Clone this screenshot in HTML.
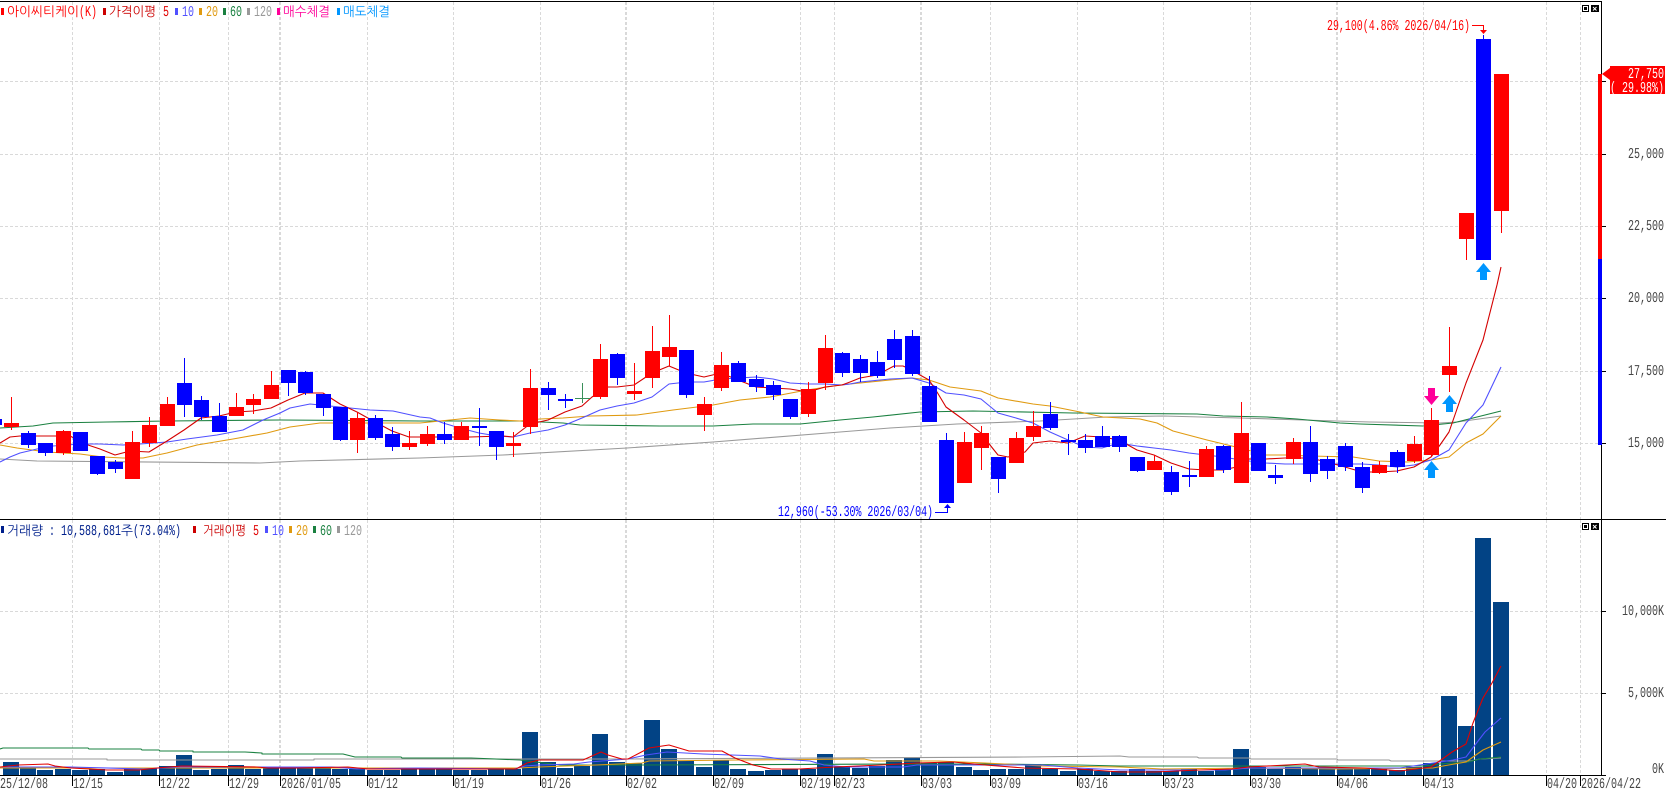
<!DOCTYPE html>
<html lang="ko">
<head>
<meta charset="utf-8">
<title>아이씨티케이(K) 일봉 차트</title>
<style>
html,body{margin:0;padding:0;background:#fff;width:1666px;height:790px;overflow:hidden}
svg{display:block}
text{text-rendering:geometricPrecision}
.m{font-family:"Liberation Mono","DejaVu Sans Mono",monospace;font-size:15px}
.k{font-family:"Liberation Sans","NanumGothic","Noto Sans CJK KR",sans-serif;font-size:13px}
.g{fill:#444}
.l{fill:none;stroke-width:1.1;stroke-linejoin:round}
.c{shape-rendering:crispEdges}
</style>
</head>
<body>
<svg width="1666" height="790" viewBox="0 0 1666 790" xmlns="http://www.w3.org/2000/svg">
<rect width="1666" height="790" fill="#fff"/>

<!-- grid -->
<g class="c" stroke="#d9d9d9" stroke-dasharray="3 2" fill="none">
<path d="M0 81.5H1601M0 154.5H1601M0 226.5H1601M0 298.5H1601M0 371.5H1601M0 443.5H1601M0 611.5H1601M0 693.5H1601"/>
<path d="M72.5 2V519M159.5 2V519M228.5 2V519M367.5 2V519M453.5 2V519M540.5 2V519M713.5 2V519M800.5 2V519M834.5 2V519M990.5 2V519M1077.5 2V519M1163.5 2V519M1250.5 2V519M1423.5 2V519M1546.5 2V519M1580.5 2V519"/>
<path d="M72.5 520V775M159.5 520V775M228.5 520V775M367.5 520V775M453.5 520V775M540.5 520V775M713.5 520V775M800.5 520V775M834.5 520V775M990.5 520V775M1077.5 520V775M1163.5 520V775M1250.5 520V775M1423.5 520V775M1546.5 520V775M1580.5 520V775"/>
<path stroke-width="2" d="M280 2V519M626 2V519M921 2V519M1337 2V519M280 520V775M626 520V775M921 520V775M1337 520V775"/>
</g>

<!-- price moving averages -->
<polyline class="l" stroke="#999" points="0,459 37,461 260,463 300,461 420,458 503,455 627,448 713,442 840,432 890,428 957,424 1040,421 1107,417 1163,416 1240,418 1303,420 1370,422 1440,423 1457,422 1501,416"/>
<polyline class="l" stroke="#1a8040" points="0,428 33,426 53,423 107,422 167,421 280,420 420,421 520,421 563,423 580,425 660,426 713,426 753,424 800,424 840,420 873,417 920,412 973,411 1073,413 1197,414 1223,416 1267,417 1297,419 1340,423 1360,424 1423,426 1453,423 1473,418 1501,411"/>
<polyline class="l" stroke="#e09a10" points="0,445 17,448 47,452 80,454 103,457 123,458 143,458 167,453 197,445 233,439 267,433 290,427 320,423 353,423 420,423 440,421 470,418 500,420 520,421 540,419 563,418 590,416 637,415 673,410 697,407 713,405 740,400 770,397 807,390 840,385 890,380 912,378 929,380 950,387 981,391 998,398 1033,404 1050,406 1080,412 1103,417 1140,419 1157,423 1173,431 1207,440 1240,448 1266,455 1285,455 1310,456 1353,457 1379,461 1407,462 1431,460 1449,457 1466,443 1483,434 1501,416"/>
<polyline class="l" stroke="#5050ff" points="0,462 10,457 20,453 37,449 53,446 80,444 100,444 123,445 140,444 167,442 187,439 217,435 243,430 263,420 280,413 290,408 310,404 330,406 350,408 370,410 393,411 420,417 430,418 443,423 460,428 479,433 497,436 513,437 530,433 548,430 565,425 582,418 600,410 617,406 634,403 652,397 669,384 687,382 704,382 721,379 738,378 756,377 773,379 790,383 808,384 825,384 842,385 850,384 860,382 890,379 912,378 929,383 946,393 964,395 981,399 998,413 1016,418 1033,423 1050,432 1068,440 1085,447 1102,448 1119,443 1137,446 1154,448 1171,450 1189,453 1206,455 1223,457 1241,460 1249,461 1266,463 1285,464 1310,464 1362,464 1379,465 1397,467 1414,465 1431,460 1449,450 1466,423 1483,405 1501,367"/>
<polyline class="l" stroke="#d40000" points="0,443 10,437 20,436 70,436 88,445 100,449 115,455 130,451 149,452 167,441 184,430 201,418 219,416 236,412 253,411 271,408 288,400 305,393 323,393 340,404 357,412 375,422 392,431 409,437 470,437 503,436 513,437 530,424 548,420 565,412 582,406 592,397 608,387 617,387 634,385 652,373 669,366 686,373 704,377 721,373 738,380 756,387 773,388 790,389 808,392 825,387 842,385 850,382 860,378 877,375 894,366 903,366 912,370 920,375 929,380 937,392 946,407 964,420 981,433 990,445 998,455 1008,457 1025,452 1033,443 1050,441 1068,443 1085,436 1102,437 1119,440 1137,450 1154,455 1171,463 1189,469 1206,470 1223,470 1241,466 1249,459 1266,459 1285,458 1310,458 1327,462 1345,467 1362,472 1379,472 1397,471 1414,467 1431,457 1440,445 1449,432 1466,383 1483,340 1497,285 1501,267"/>

<!-- candles -->
<path class="c" fill="#ff0000" d="M4 423h15V427h-15zM11 397h1V430h-1zM56 431h15V453h-15zM63 430h1V455h-1zM125 442h15V479h-15zM132 431h1V442h-1zM142 425h15V443h-15zM149 417h1V447h-1zM160 404h15V426h-15zM167 397h1V404h-1zM229 407h15V416h-15zM236 393h1V407h-1zM246 399h15V405h-15zM253 394h1V414h-1zM264 385h15V399h-15zM271 371h1V385h-1zM350 418h15V440h-15zM357 412h1V453h-1zM402 443h15V447h-15zM409 431h1V450h-1zM420 434h15V444h-15zM427 426h1V446h-1zM454 426h15V440h-15zM461 422h1V426h-1zM506 443h15V446h-15zM513 432h1V457h-1zM523 388h15V427h-15zM530 369h1V434h-1zM593 359h15V397h-15zM600 344h1V399h-1zM627 391h15V394h-15zM634 363h1V400h-1zM645 351h15V378h-15zM652 326h1V388h-1zM662 347h15V357h-15zM669 315h1V366h-1zM697 404h15V415h-15zM704 397h1V431h-1zM714 365h15V388h-15zM721 352h1V391h-1zM801 389h15V414h-15zM808 382h1V417h-1zM818 348h15V383h-15zM825 335h1V390h-1zM957 442h15V483h-15zM964 432h1V442h-1zM974 433h15V448h-15zM981 426h1V470h-1zM1009 438h15V463h-15zM1016 432h1V438h-1zM1026 426h15V437h-15zM1033 411h1V441h-1zM1147 461h15V470h-15zM1154 455h1V461h-1zM1199 449h15V477h-15zM1206 446h1V449h-1zM1234 433h15V483h-15zM1241 402h1V433h-1zM1286 442h15V459h-15zM1293 438h1V464h-1zM1372 465h15V473h-15zM1379 461h1V474h-1zM1407 444h15V461h-15zM1414 436h1V463h-1zM1424 420h15V455h-15zM1431 408h1V457h-1zM1442 366h15V375h-15zM1449 327h1V392h-1zM1459 213h15V239h-15zM1466 239h1V260h-1zM1494 74h15V211h-15zM1501 211h1V233h-1z"/>
<path class="c" fill="#0000ff" d="M-13 419h15V425h-15zM21 433h15V445h-15zM28 431h1V448h-1zM38 443h15V453h-15zM45 453h1V456h-1zM73 432h15V451h-15zM90 456h15V474h-15zM97 474h1V475h-1zM108 462h15V469h-15zM115 460h1V473h-1zM177 383h15V405h-15zM184 358h1V417h-1zM194 400h15V417h-15zM201 396h1V420h-1zM212 416h15V432h-15zM219 403h1V416h-1zM281 370h15V383h-15zM288 383h1V396h-1zM298 372h15V393h-15zM305 371h1V395h-1zM316 394h15V408h-15zM323 408h1V416h-1zM333 407h15V440h-15zM340 440h1V441h-1zM368 418h15V438h-15zM375 415h1V440h-1zM385 434h15V447h-15zM392 427h1V451h-1zM437 434h15V440h-15zM444 422h1V444h-1zM472 426h15V428h-15zM479 408h1V446h-1zM489 431h15V447h-15zM496 447h1V460h-1zM541 388h15V395h-15zM548 382h1V410h-1zM558 399h15V401h-15zM565 394h1V408h-1zM610 354h15V378h-15zM617 353h1V385h-1zM679 350h15V395h-15zM686 395h1V398h-1zM731 363h15V382h-15zM738 361h1V363h-1zM749 379h15V387h-15zM756 375h1V392h-1zM766 385h15V395h-15zM773 381h1V400h-1zM783 399h15V417h-15zM790 417h1V419h-1zM835 353h15V373h-15zM842 352h1V377h-1zM853 359h15V373h-15zM860 355h1V382h-1zM870 362h15V376h-15zM877 351h1V378h-1zM887 339h15V360h-15zM894 330h1V368h-1zM905 336h15V374h-15zM912 330h1V376h-1zM922 386h15V422h-15zM929 376h1V386h-1zM939 440h15V503h-15zM946 433h1V440h-1zM991 457h15V479h-15zM998 479h1V493h-1zM1043 414h15V428h-15zM1050 402h1V430h-1zM1061 440h15V442h-15zM1068 434h1V455h-1zM1078 440h15V448h-15zM1085 434h1V453h-1zM1095 436h15V447h-15zM1102 426h1V436h-1zM1112 436h15V447h-15zM1119 435h1V452h-1zM1130 457h15V471h-15zM1137 471h1V472h-1zM1164 472h15V492h-15zM1171 466h1V495h-1zM1182 475h15V477h-15zM1189 461h1V487h-1zM1216 446h15V470h-15zM1223 445h1V473h-1zM1251 443h15V471h-15zM1268 475h15V478h-15zM1275 465h1V484h-1zM1303 442h15V474h-15zM1310 426h1V482h-1zM1320 459h15V471h-15zM1327 456h1V479h-1zM1338 446h15V467h-15zM1345 443h1V471h-1zM1355 467h15V488h-15zM1362 462h1V493h-1zM1390 452h15V467h-15zM1397 450h1V473h-1zM1476 39h15V260h-15zM1483 35h1V39h-1z"/>
<path class="c" fill="#3a8f5a" d="M575 398h15v1h-15zM582 383h1V403h-1z"/>

<!-- trade arrows -->
<polygon fill="#0096ff" points="1449.5,395 1457,404 1453,404 1453,412 1446,412 1446,404 1442,404"/>
<polygon fill="#0096ff" points="1431.5,461 1439,470 1435,470 1435,478 1428,478 1428,470 1424,470"/>
<polygon fill="#0096ff" points="1483.5,263 1491,272 1487,272 1487,280 1480,280 1480,272 1476,272"/>
<polygon fill="#ff0099" points="1428,388 1435,388 1435,396 1439,396 1431.5,405 1424,396 1428,396"/>

<!-- hi/lo annotations -->
<text class="m" x="1327" y="30" fill="#f00" textLength="143" lengthAdjust="spacingAndGlyphs">29,100(4.86% 2026/04/16)</text>
<path class="c" fill="none" stroke="#f00" d="M1472 25.500H1483.500V31"/>
<polygon fill="#f00" points="1480,30 1487,30 1483.500,34"/>
<text class="m" x="778" y="516" fill="#00f" textLength="155" lengthAdjust="spacingAndGlyphs">12,960(-53.30% 2026/03/04)</text>
<path class="c" fill="none" stroke="#00f" d="M935 512.500H947.500V507"/>
<polygon fill="#00f" points="947.500,504 951,508 944,508"/>

<!-- volume bars -->
<path class="c" fill="#024385" d="M3 762h16V775h-16zM20 768h16V775h-16zM37 770h16V775h-16zM55 769h16V775h-16zM72 770h16V775h-16zM89 769h16V775h-16zM107 772h16V775h-16zM124 768h16V775h-16zM141 768h16V775h-16zM159 766h16V775h-16zM176 755h16V775h-16zM193 770h16V775h-16zM211 769h16V775h-16zM228 765h16V775h-16zM245 769h16V775h-16zM263 768h16V775h-16zM280 768h16V775h-16zM297 768h16V775h-16zM315 767h16V775h-16zM332 769h16V775h-16zM349 769h16V775h-16zM367 770h16V775h-16zM384 770h16V775h-16zM401 769h16V775h-16zM419 769h16V775h-16zM436 769h16V775h-16zM453 770h16V775h-16zM471 770h16V775h-16zM488 769h16V775h-16zM505 769h16V775h-16zM522 732h16V775h-16zM540 762h16V775h-16zM557 768h16V775h-16zM574 766h16V775h-16zM592 734h16V775h-16zM609 762h16V775h-16zM626 763h16V775h-16zM644 720h16V775h-16zM661 749h16V775h-16zM678 761h16V775h-16zM696 767h16V775h-16zM713 760h16V775h-16zM730 769h16V775h-16zM748 771h16V775h-16zM765 770h16V775h-16zM782 769h16V775h-16zM800 769h16V775h-16zM817 754h16V775h-16zM834 767h16V775h-16zM852 768h16V775h-16zM869 766h16V775h-16zM886 760h16V775h-16zM904 758h16V775h-16zM921 763h16V775h-16zM938 762h16V775h-16zM956 767h16V775h-16zM973 770h16V775h-16zM990 769h16V775h-16zM1008 769h16V775h-16zM1025 764h16V775h-16zM1042 769h16V775h-16zM1060 771h16V775h-16zM1077 769h16V775h-16zM1094 771h16V775h-16zM1111 771h16V775h-16zM1129 769h16V775h-16zM1146 771h16V775h-16zM1163 771h16V775h-16zM1181 769h16V775h-16zM1198 771h16V775h-16zM1215 769h16V775h-16zM1233 749h16V775h-16zM1250 767h16V775h-16zM1267 769h16V775h-16zM1285 767h16V775h-16zM1302 768h16V775h-16zM1319 768h16V775h-16zM1337 768h16V775h-16zM1354 769h16V775h-16zM1371 769h16V775h-16zM1389 770h16V775h-16zM1406 767h16V775h-16zM1423 763h16V775h-16zM1441 696h16V775h-16zM1458 726h16V775h-16zM1475 538h16V775h-16zM1493 602h16V775h-16z"/>

<!-- volume moving averages -->
<polyline class="l" stroke="#999" points="0,759 107,759 107,760 314,760 314,759 628,759 1024,757 1120,756 1129,757 1197,757 1199,758 1249,758 1251,759 1337,759 1338,760 1389,760 1391,761 1435,761 1470,761 1480,759 1501,758"/>
<polyline class="l" stroke="#1a8040" points="0,749 3,748 88,748 89,749 141,749 142,750 159,750 160,751 193,751 193,752 245,752 262,753 262,754 343,754 355,757 401,757 402,758 471,758 520,760 560,765 642,765 917,764 989,764 1078,765 1120,766 1424,766 1440,764 1468,762 1480,759 1501,757"/>
<polyline class="l" stroke="#e09a10" points="0,768 179,768 368,768 518,768 539,767 596,765 642,763 649,761 739,760 864,759 874,761 939,761 985,763 1042,766 1120,767 1162,769 1249,768 1337,769 1433,768 1443,766 1466,762 1473,757 1483,750 1501,742"/>
<polyline class="l" stroke="#5050ff" points="0,767 71,767 143,769 179,767 280,767 332,767 357,769 418,768 514,769 525,766 539,765 574,764 589,762 628,759 646,755 667,752 703,754 760,756 781,759 810,761 824,765 846,767 903,767 917,765 1042,765 1078,768 1120,770 1225,770 1249,768 1400,768 1433,763 1453,760 1466,757 1475,745 1485,732 1501,718"/>
<polyline class="l" stroke="#e00000" points="0,767 18,765 48,764 55,766 71,768 107,770 139,770 157,768 182,766 257,767 268,768 296,768 348,767 368,769 516,769 527,763 539,760 583,760 601,752 608,755 622,759 628,759 649,748 669,745 689,751 722,751 735,758 753,765 771,769 799,769 817,768 835,767 881,765 917,763 953,762 985,765 1024,768 1078,769 1120,772 1155,772 1199,770 1232,769 1249,767 1305,764 1319,767 1365,768 1400,771 1431,767 1441,760 1452,752 1466,744 1473,723 1483,698 1492,683 1501,666"/>

<!-- frame -->
<g class="c" fill="#000">
<rect x="0" y="1" width="1602" height="1"/>
<rect x="0" y="519" width="1666" height="1"/>
<rect x="0" y="775" width="1606" height="1"/>
<rect x="1601" y="1" width="1" height="775"/>
<path d="M1601 81h5v1h-5zM1601 154h5v1h-5zM1601 226h5v1h-5zM1601 298h5v1h-5zM1601 371h5v1h-5zM1601 443h5v1h-5zM1601 611h5v1h-5zM1601 693h5v1h-5z"/>
<path d="M72 776h1v10h-1zM159 776h1v10h-1zM228 776h1v10h-1zM280 776h1v10h-1zM367 776h1v10h-1zM453 776h1v10h-1zM540 776h1v10h-1zM626 776h1v10h-1zM713 776h1v10h-1zM800 776h1v10h-1zM834 776h1v10h-1zM921 776h1v10h-1zM990 776h1v10h-1zM1077 776h1v10h-1zM1163 776h1v10h-1zM1250 776h1v10h-1zM1337 776h1v10h-1zM1423 776h1v10h-1zM1546 776h1v10h-1zM1580 776h1v10h-1z"/>
</g>

<!-- price range bar and current label -->
<rect class="c" x="1598" y="74" width="4" height="185" fill="#f00"/>
<rect class="c" x="1598" y="259" width="4" height="186" fill="#00f"/>
<rect class="c" x="1610" y="66" width="55" height="28" fill="#f00"/>
<polygon fill="#f00" points="1602,74 1610,68 1610,80"/>
<text class="m" x="1628" y="78" fill="#fff" textLength="36" lengthAdjust="spacingAndGlyphs">27,750</text>
<text class="m" x="1610" y="92" fill="#fff" textLength="54" lengthAdjust="spacingAndGlyphs" xml:space="preserve">( 29.98%)</text>

<!-- price axis labels -->
<text class="m g" x="1628" y="158" textLength="36" lengthAdjust="spacingAndGlyphs">25,000</text>
<text class="m g" x="1628" y="230" textLength="36" lengthAdjust="spacingAndGlyphs">22,500</text>
<text class="m g" x="1628" y="302" textLength="36" lengthAdjust="spacingAndGlyphs">20,000</text>
<text class="m g" x="1628" y="375" textLength="36" lengthAdjust="spacingAndGlyphs">17,500</text>
<text class="m g" x="1628" y="447" textLength="36" lengthAdjust="spacingAndGlyphs">15,000</text>
<text class="m g" x="1622" y="615" textLength="42" lengthAdjust="spacingAndGlyphs">10,000K</text>
<text class="m g" x="1628" y="697" textLength="36" lengthAdjust="spacingAndGlyphs">5,000K</text>
<text class="m g" x="1652" y="773" textLength="12" lengthAdjust="spacingAndGlyphs">0K</text>

<!-- date labels -->
<g class="m g">
<text x="0" y="788" textLength="48" lengthAdjust="spacingAndGlyphs">25/12/08</text>
<text x="73" y="788" textLength="30" lengthAdjust="spacingAndGlyphs">12/15</text>
<text x="160" y="788" textLength="30" lengthAdjust="spacingAndGlyphs">12/22</text>
<text x="229" y="788" textLength="30" lengthAdjust="spacingAndGlyphs">12/29</text>
<text x="281" y="788" textLength="60" lengthAdjust="spacingAndGlyphs">2026/01/05</text>
<text x="368" y="788" textLength="30" lengthAdjust="spacingAndGlyphs">01/12</text>
<text x="454" y="788" textLength="30" lengthAdjust="spacingAndGlyphs">01/19</text>
<text x="541" y="788" textLength="30" lengthAdjust="spacingAndGlyphs">01/26</text>
<text x="627" y="788" textLength="30" lengthAdjust="spacingAndGlyphs">02/02</text>
<text x="714" y="788" textLength="30" lengthAdjust="spacingAndGlyphs">02/09</text>
<text x="801" y="788" textLength="30" lengthAdjust="spacingAndGlyphs">02/19</text>
<text x="835" y="788" textLength="30" lengthAdjust="spacingAndGlyphs">02/23</text>
<text x="922" y="788" textLength="30" lengthAdjust="spacingAndGlyphs">03/03</text>
<text x="991" y="788" textLength="30" lengthAdjust="spacingAndGlyphs">03/09</text>
<text x="1078" y="788" textLength="30" lengthAdjust="spacingAndGlyphs">03/16</text>
<text x="1164" y="788" textLength="30" lengthAdjust="spacingAndGlyphs">03/23</text>
<text x="1251" y="788" textLength="30" lengthAdjust="spacingAndGlyphs">03/30</text>
<text x="1338" y="788" textLength="30" lengthAdjust="spacingAndGlyphs">04/06</text>
<text x="1424" y="788" textLength="30" lengthAdjust="spacingAndGlyphs">04/13</text>
<text x="1547" y="788" textLength="30" lengthAdjust="spacingAndGlyphs">04/20</text>
<text x="1581" y="788" textLength="60" lengthAdjust="spacingAndGlyphs">2026/04/22</text>
</g>

<!-- price legend -->
<g class="c">
<rect x="1" y="8" width="3" height="7" fill="#f00"/>
<rect x="103" y="8" width="3" height="7" fill="#c00"/>
<rect x="175" y="8" width="3" height="7" fill="#5050ff"/>
<rect x="199" y="8" width="3" height="7" fill="#e09a10"/>
<rect x="223" y="8" width="3" height="7" fill="#1a8040"/>
<rect x="247" y="8" width="3" height="7" fill="#999"/>
<rect x="277" y="8" width="3" height="7" fill="#ff0099"/>
<rect x="337" y="8" width="3" height="7" fill="#0096ff"/>
</g>
<text class="k" x="7" y="16" fill="#f00" textLength="72" lengthAdjust="spacingAndGlyphs">아이씨티케이</text>
<text class="m" x="79" y="16" fill="#f00" textLength="18" lengthAdjust="spacingAndGlyphs">(K)</text>
<text class="k" x="109" y="16" fill="#c00" textLength="47" lengthAdjust="spacingAndGlyphs">가격이평</text>
<text class="m" x="163" y="16" fill="#e00000" textLength="6" lengthAdjust="spacingAndGlyphs">5</text>
<text class="m" x="182" y="16" fill="#5050ff" textLength="12" lengthAdjust="spacingAndGlyphs">10</text>
<text class="m" x="206" y="16" fill="#e09a10" textLength="12" lengthAdjust="spacingAndGlyphs">20</text>
<text class="m" x="230" y="16" fill="#1a8040" textLength="12" lengthAdjust="spacingAndGlyphs">60</text>
<text class="m" x="254" y="16" fill="#999" textLength="18" lengthAdjust="spacingAndGlyphs">120</text>
<text class="k" x="283" y="16" fill="#ff0099" textLength="47" lengthAdjust="spacingAndGlyphs">매수체결</text>
<text class="k" x="343" y="16" fill="#0096ff" textLength="47" lengthAdjust="spacingAndGlyphs">매도체결</text>

<!-- volume legend -->
<g class="c">
<rect x="1" y="526" width="3" height="7" fill="#00208c"/>
<rect x="193" y="526" width="3" height="7" fill="#c00"/>
<rect x="265" y="526" width="3" height="7" fill="#5050ff"/>
<rect x="289" y="526" width="3" height="7" fill="#e09a10"/>
<rect x="313" y="526" width="3" height="7" fill="#1a8040"/>
<rect x="337" y="526" width="3" height="7" fill="#999"/>
</g>
<text class="k" x="7" y="535" fill="#00208c" textLength="36" lengthAdjust="spacingAndGlyphs">거래량</text>
<text class="m" x="49" y="535" fill="#00208c" textLength="6" lengthAdjust="spacingAndGlyphs">:</text>
<text class="m" x="61" y="535" fill="#00208c" textLength="60" lengthAdjust="spacingAndGlyphs">10,588,681</text>
<text class="k" x="121" y="535" fill="#00208c" textLength="12" lengthAdjust="spacingAndGlyphs">주</text>
<text class="m" x="133" y="535" fill="#00208c" textLength="48" lengthAdjust="spacingAndGlyphs">(73.04%)</text>
<text class="k" x="203" y="535" fill="#c00" textLength="43" lengthAdjust="spacingAndGlyphs">거래이평</text>
<text class="m" x="253" y="535" fill="#e00000" textLength="6" lengthAdjust="spacingAndGlyphs">5</text>
<text class="m" x="272" y="535" fill="#5050ff" textLength="12" lengthAdjust="spacingAndGlyphs">10</text>
<text class="m" x="296" y="535" fill="#e09a10" textLength="12" lengthAdjust="spacingAndGlyphs">20</text>
<text class="m" x="320" y="535" fill="#1a8040" textLength="12" lengthAdjust="spacingAndGlyphs">60</text>
<text class="m" x="344" y="535" fill="#999" textLength="18" lengthAdjust="spacingAndGlyphs">120</text>

<!-- pane buttons -->
<g class="c">
<rect x="1582.500" y="5.500" width="6" height="6" fill="#fff" stroke="#000"/>
<rect x="1584" y="7" width="3" height="3" fill="#000"/>
<rect x="1591" y="5" width="8" height="7" fill="#000"/>
<rect x="1582.500" y="523.500" width="6" height="6" fill="#fff" stroke="#000"/>
<rect x="1584" y="525" width="3" height="3" fill="#000"/>
<rect x="1591" y="523" width="8" height="7" fill="#000"/>
</g>
<path d="M1593 7l3.500 3.500M1596.500 7l-3.500 3.500M1593 525l3.500 3.500M1596.500 525l-3.500 3.500" stroke="#fff" fill="none"/>
</svg>
</body>
</html>
